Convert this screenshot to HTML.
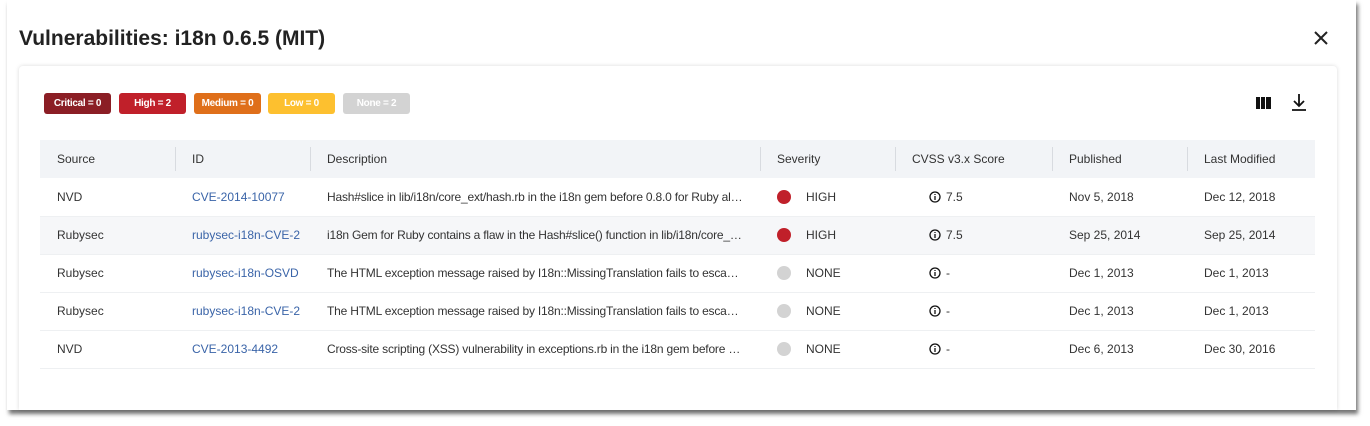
<!DOCTYPE html>
<html><head><style>
*{box-sizing:border-box;margin:0;padding:0}
body{width:1370px;height:426px;background:#fff;font-family:"Liberation Sans",sans-serif;position:relative;overflow:hidden}
.dlg{position:absolute;left:7px;top:0;width:1349px;height:410px;background:#fff;box-shadow:2px 4px 4px rgba(0,0,0,.55)}
h1{position:absolute;left:19px;top:27px;font-size:21px;font-weight:bold;color:#222}
.x{position:absolute;left:1314px;top:31px}
.card{position:absolute;left:19px;top:66px;width:1318px;height:344px;background:#fff;box-shadow:0 0 4px rgba(0,0,0,.15);border-radius:4px 4px 0 0}
.b{position:absolute;top:93px;height:21px;width:67px;border-radius:3px;color:#fff;font-size:10px;font-weight:bold;text-align:center;line-height:21px;letter-spacing:-.3px}
table{position:absolute;left:40px;top:140px;width:1275px;border-collapse:collapse;table-layout:fixed;font-size:12px;color:#333}
th{height:38px;background:#f2f4f7;text-align:left;font-weight:normal;padding-left:17px;position:relative;color:#333}
th+th:before{content:"";position:absolute;left:0;top:7px;height:24px;border-left:1px solid #d8dbe0}
td{height:38px;padding-left:17px;border-bottom:1px solid #eef0f2;white-space:nowrap;overflow:hidden}
td.d{padding-right:16px;text-overflow:ellipsis;letter-spacing:-.2px}
tr.h td{background:#f6f7f9}
a{color:#3a64a8;text-decoration:none}
.dot{display:inline-block;width:14px;height:14px;border-radius:50%;vertical-align:middle;margin-right:15px;margin-top:-2px}
.i{display:inline-block;vertical-align:middle;margin-right:5px;margin-left:17px;margin-top:-2px}
</style></head><body>
<div class="dlg"></div>
<h1>Vulnerabilities: i18n 0.6.5 (MIT)</h1>
<svg class="x" width="14" height="14" viewBox="0 0 14 14"><path d="M1 1L13 13M13 1L1 13" stroke="#222" stroke-width="2"/></svg>
<div class="card"></div>
<div class="b" style="left:44px;background:#8b1e25">Critical = 0</div>
<div class="b" style="left:119px;background:#c0202a">High = 2</div>
<div class="b" style="left:194px;background:#df6f1a">Medium = 0</div>
<div class="b" style="left:268px;background:#fdc02f">Low = 0</div>
<div class="b" style="left:343px;background:#d3d3d3">None = 2</div>
<svg style="position:absolute;left:1256px;top:97px" width="15" height="12"><rect x="0" y="0" width="4" height="12" fill="#111"/><rect x="5" y="0" width="4" height="12" fill="#111"/><rect x="10" y="0" width="5" height="12" fill="#111"/></svg>
<svg style="position:absolute;left:1291px;top:93px" width="16" height="19" viewBox="0 0 16 19"><path d="M8 1V13M3 8L8 13L13 8M1 17H15" stroke="#111" stroke-width="1.8" fill="none"/></svg>
<table>
<colgroup><col style="width:135px"><col style="width:135px"><col style="width:450px"><col style="width:135px"><col style="width:157px"><col style="width:135px"><col></colgroup>
<tr><th>Source</th><th>ID</th><th>Description</th><th>Severity</th><th>CVSS v3.x Score</th><th>Published</th><th>Last Modified</th></tr>
<tr><td>NVD</td><td><a>CVE-2014-10077</a></td><td class="d">Hash#slice in lib/i18n/core_ext/hash.rb in the i18n gem before 0.8.0 for Ruby allows</td><td><span class="dot" style="background:#c0202a"></span>HIGH</td><td><svg class="i" width="12" height="12"><circle cx="6" cy="6" r="5" stroke="#111" stroke-width="1.3" fill="none"/><path d="M6 5V9M6 3v1" stroke="#111" stroke-width="1.3"/></svg>7.5</td><td>Nov 5, 2018</td><td>Dec 12, 2018</td></tr>
<tr class="h"><td>Rubysec</td><td><a>rubysec-i18n-CVE-2</a></td><td class="d">i18n Gem for Ruby contains a flaw in the Hash#slice() function in lib/i18n/core_ext</td><td><span class="dot" style="background:#c0202a"></span>HIGH</td><td><svg class="i" width="12" height="12"><circle cx="6" cy="6" r="5" stroke="#111" stroke-width="1.3" fill="none"/><path d="M6 5V9M6 3v1" stroke="#111" stroke-width="1.3"/></svg>7.5</td><td>Sep 25, 2014</td><td>Sep 25, 2014</td></tr>
<tr><td>Rubysec</td><td><a>rubysec-i18n-OSVD</a></td><td class="d">The HTML exception message raised by I18n::MissingTranslation fails to escape the</td><td><span class="dot" style="background:#d3d3d3"></span>NONE</td><td><svg class="i" width="12" height="12"><circle cx="6" cy="6" r="5" stroke="#111" stroke-width="1.3" fill="none"/><path d="M6 5V9M6 3v1" stroke="#111" stroke-width="1.3"/></svg>-</td><td>Dec 1, 2013</td><td>Dec 1, 2013</td></tr>
<tr><td>Rubysec</td><td><a>rubysec-i18n-CVE-2</a></td><td class="d">The HTML exception message raised by I18n::MissingTranslation fails to escape the</td><td><span class="dot" style="background:#d3d3d3"></span>NONE</td><td><svg class="i" width="12" height="12"><circle cx="6" cy="6" r="5" stroke="#111" stroke-width="1.3" fill="none"/><path d="M6 5V9M6 3v1" stroke="#111" stroke-width="1.3"/></svg>-</td><td>Dec 1, 2013</td><td>Dec 1, 2013</td></tr>
<tr><td>NVD</td><td><a>CVE-2013-4492</a></td><td class="d">Cross-site scripting (XSS) vulnerability in exceptions.rb in the i18n gem before 0.6.6</td><td><span class="dot" style="background:#d3d3d3"></span>NONE</td><td><svg class="i" width="12" height="12"><circle cx="6" cy="6" r="5" stroke="#111" stroke-width="1.3" fill="none"/><path d="M6 5V9M6 3v1" stroke="#111" stroke-width="1.3"/></svg>-</td><td>Dec 6, 2013</td><td>Dec 30, 2016</td></tr>
</table>
</body></html>
